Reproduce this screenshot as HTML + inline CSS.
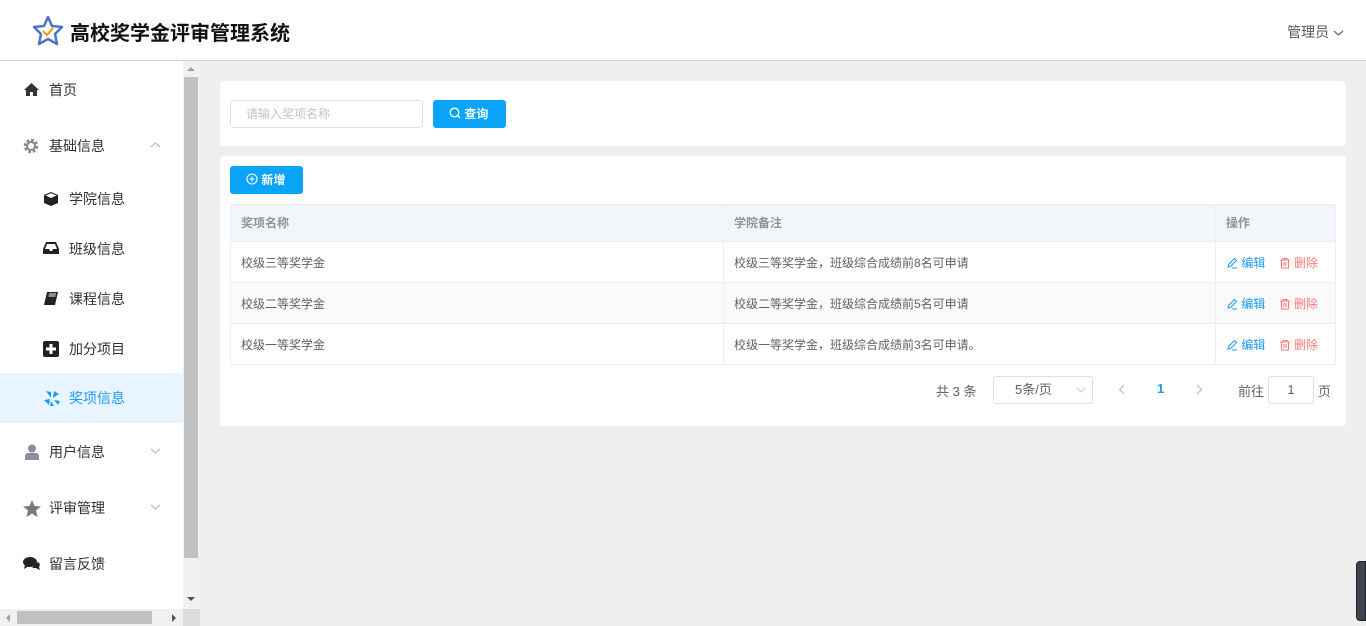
<!DOCTYPE html>
<html><head><meta charset="utf-8"><style>
*{box-sizing:border-box;margin:0;padding:0}
body{width:1366px;height:626px;overflow:hidden;font-family:"Liberation Sans","Noto Sans CJK SC",sans-serif;background:#efefef;position:relative;color:#303133}
.hdr{position:absolute;left:0;top:0;width:1366px;height:61px;background:#fff;border-bottom:1px solid #d4d4d4}
.title{position:absolute;left:70px;top:17px;font-size:20px;font-weight:bold;color:#111}
.admin{position:absolute;right:22px;top:22px;font-size:14px;color:#555}
.side{position:absolute;left:0;top:61px;width:183px;height:548px;background:#fff}
.mi{position:absolute;left:0;width:183px;height:50px;font-size:14px;color:#303133}
.mi span{position:absolute;top:16px;line-height:18px}
.mi svg{position:absolute;top:17px}
.vs{position:absolute;left:183px;top:61px;width:17px;height:548px;background:#f1f1f1}
.hs{position:absolute;left:0;top:609px;width:200px;height:17px;background:#f1f1f1}
.card{position:absolute;left:220px;width:1126px;background:#fff;border-radius:4px}
.btn{position:absolute;height:28px;background:#0aa5f8;border-radius:3px;color:#fff;font-size:12px;font-weight:bold;line-height:28px}
table{position:absolute;left:10px;top:48px;width:1106px;border-collapse:collapse;font-size:12px;color:#606266}
td,th{border:1px solid #ebeef5;text-align:left;padding-left:10px}
th{background:#f2f5f9;height:37px;font-weight:bold;color:#909399;padding-top:0;line-height:14px}
td{height:41px}
tr.s td{background:#fafafa}
.ed{color:#1a9cf5}.dl{color:#f77}
.ic{vertical-align:-2px}
</style></head><body>
<div class="hdr">
<svg style="position:absolute;left:31px;top:14px" width="34" height="33" viewBox="0 0 34 33"><path d="M17 3 L21 12 L31 13 L24 20 L26 30 L17 25 L8 30 L10 20 L3 13 L13 12 Z" fill="none" stroke="#4a74c8" stroke-width="2.5" stroke-linejoin="round"/><path d="M12 17 L16 21 L22 14" fill="none" stroke="#f49a2c" stroke-width="2.2"/></svg>
<div class="title">高校奖学金评审管理系统</div>
<div class="admin">管理员 <svg width="11" height="8" viewBox="0 0 11 8"><path d="M1 2 L5.5 6 L10 2" fill="none" stroke="#666" stroke-width="1.2"/></svg></div>
</div>
<div class="side">
<div class="mi" style="top:4px"><svg style="left:23px" width="17" height="15" viewBox="0 0 17 15"><path d="M8.5 1 L1 8 H3 V14 H7 V10 H10 V14 H14 V8 H16 Z" fill="#333"/></svg><span style="left:49px">首页</span></div>
<div class="mi" style="top:60px"><svg style="left:23px" width="16" height="16" viewBox="0 0 16 16"><circle cx="8" cy="8" r="5.5" fill="none" stroke="#888" stroke-width="3.5" stroke-dasharray="2.5 1.8"/><circle cx="8" cy="8" r="4" fill="none" stroke="#888" stroke-width="2"/></svg><span style="left:49px">基础信息</span><svg style="left:150px;top:20px" width="11" height="8" viewBox="0 0 11 8"><path d="M1 6 L5.5 2 L10 6" fill="none" stroke="#aaa" stroke-width="1"/></svg></div>
<div class="mi" style="top:113px"><svg style="left:43px" width="16" height="16" viewBox="0 0 16 16"><path d="M8 1 L15 4 V12 L8 15 L1 12 V4 Z" fill="#222"/><path d="M2.5 4.5 L8 7 L13.5 4.5 L8 2.3 Z" fill="#fff"/></svg><span style="left:69px">学院信息</span></div>
<div class="mi" style="top:163px"><svg style="left:43px" width="16" height="14" viewBox="0 0 16 14"><path d="M3 1 H13 L16 8 V13 H0 V8 Z" fill="#222"/><path d="M4 3 H12 L14 8 H10 L9 10 H7 L6 8 H2 Z" fill="#fff"/></svg><span style="left:69px">班级信息</span></div>
<div class="mi" style="top:213px"><svg style="left:43px" width="16" height="15" viewBox="0 0 16 15"><path d="M4 1 H15 L12 14 H1 Z" fill="#222"/><path d="M6 3 H13 M5.5 5 H12.5" stroke="#fff" stroke-width="1"/></svg><span style="left:69px">课程信息</span></div>
<div class="mi" style="top:263px"><svg style="left:43px" width="16" height="16" viewBox="0 0 16 16"><rect x="0" y="0" width="16" height="16" rx="2" fill="#222"/><path d="M8 3 V13 M3 8 H13" stroke="#fff" stroke-width="3"/></svg><span style="left:69px">加分项目</span></div>
<div class="mi" style="top:312px;background:#e8f4ff;height:50px"><svg style="left:44px;top:17px" width="16" height="17" viewBox="0 0 16 17"><path d="M2 1 L7 2 L7 8 Z M0 10 L6 9 L5 15 Z M7 11 L10 16 L6 16 Z M10 1 L15 4 L9 8 Z M10 10 L16 11 L14 15 Z" fill="#1a9cf5"/></svg><span style="left:69px;color:#1a9cf5">奖项信息</span></div>
<div class="mi" style="top:366px"><svg style="left:25px" width="14" height="16" viewBox="0 0 14 16"><circle cx="7" cy="4.5" r="4" fill="#8a8f99"/><path d="M0 16 V12 Q0 9 4 9 H10 Q14 9 14 12 V16 Z" fill="#8a8f99"/></svg><span style="left:49px">用户信息</span><svg style="left:150px;top:20px" width="11" height="8" viewBox="0 0 11 8"><path d="M1 2 L5.5 6 L10 2" fill="none" stroke="#aaa" stroke-width="1"/></svg></div>
<div class="mi" style="top:422px"><svg style="left:23px" width="18" height="17" viewBox="0 0 18 17"><path d="M9 0 L11.5 6 L18 6.5 L13 10.5 L14.5 17 L9 13.5 L3.5 17 L5 10.5 L0 6.5 L6.5 6 Z" fill="#777"/></svg><span style="left:49px">评审管理</span><svg style="left:150px;top:20px" width="11" height="8" viewBox="0 0 11 8"><path d="M1 2 L5.5 6 L10 2" fill="none" stroke="#aaa" stroke-width="1"/></svg></div>
<div class="mi" style="top:478px"><svg style="left:23px" width="18" height="15" viewBox="0 0 18 15"><ellipse cx="7" cy="6" rx="7" ry="5" fill="#222"/><path d="M2 9 L1 13 L6 10 Z" fill="#222"/><path d="M15 6 Q18 8 16 11 L17 14 L13 12 Q10 12 9 12" fill="#222"/></svg><span style="left:49px">留言反馈</span></div>
</div>
<div class="vs"><div style="position:absolute;left:1px;top:16px;width:14px;height:481px;background:#c1c1c1"></div>
<div style="position:absolute;left:4px;top:6px;border:4px solid transparent;border-bottom:4px solid #a0a0a0;border-top:0"></div>
<div style="position:absolute;left:4px;top:536px;border:4px solid transparent;border-top:4px solid #505050;border-bottom:0"></div></div>
<div class="hs"><div style="position:absolute;left:17px;top:2px;width:135px;height:13px;background:#c1c1c1"></div>
<div style="position:absolute;left:6px;top:5px;border:4px solid transparent;border-right:4px solid #a0a0a0;border-left:0"></div>
<div style="position:absolute;left:172px;top:5px;border:4px solid transparent;border-left:4px solid #505050;border-right:0"></div></div>
<div style="position:absolute;left:183px;top:609px;width:17px;height:17px;background:#dcdcdc"></div>

<div class="card" style="top:81px;height:65px">
<div style="position:absolute;left:10px;top:19px;width:193px;height:28px;border:1px solid #dcdfe6;border-radius:4px;font-size:12px;color:#c0c4cc;line-height:26px;padding-left:15px">请输入奖项名称</div>
<div class="btn" style="left:213px;top:19px;width:73px;padding-left:16px"><svg width="12" height="12" viewBox="0 0 12 12" style="vertical-align:-1px"><circle cx="5.5" cy="5.5" r="4.3" fill="none" stroke="#fff" stroke-width="1.3"/><path d="M8.5 8.5 L11 11" stroke="#fff" stroke-width="1.3"/></svg> 查询</div>
</div>
<div class="card" style="top:156px;height:270px">
<div class="btn" style="left:10px;top:10px;width:73px;padding-left:16px"><svg width="12" height="12" viewBox="0 0 12 12" style="vertical-align:-1px"><circle cx="6" cy="6" r="5" fill="none" stroke="#fff" stroke-width="1.1"/><path d="M6 3.5 V8.5 M3.5 6 H8.5" stroke="#fff" stroke-width="1.1"/></svg> 新增</div>
<table>
<tr style="height:37px"><th style="width:493px;height:36px">奖项名称</th><th style="width:492px;height:36px">学院备注</th><th style="height:36px">操作</th></tr>
<tr><td>校级三等奖学金</td><td>校级三等奖学金，班级综合成绩前8名可申请</td><td><span class="ed"><svg class="ic" width="12" height="12" viewBox="0 0 12 12"><path d="M2 10 L2.5 7.5 L8.5 1.5 L10.5 3.5 L4.5 9.5 Z M6 11 H11" fill="none" stroke="#1a9cf5" stroke-width="1"/></svg> 编辑</span>&nbsp;&nbsp;&nbsp;&nbsp;<span class="dl"><svg class="ic" width="12" height="12" viewBox="0 0 12 12"><path d="M1 3 H11 M4 3 V1.5 H8 V3 M2.5 3 V11 H9.5 V3 M5 5 V9 M7 5 V9" fill="none" stroke="#f77" stroke-width="1"/></svg> 删除</span></td></tr>
<tr class="s"><td>校级二等奖学金</td><td>校级二等奖学金，班级综合成绩前5名可申请</td><td><span class="ed"><svg class="ic" width="12" height="12" viewBox="0 0 12 12"><path d="M2 10 L2.5 7.5 L8.5 1.5 L10.5 3.5 L4.5 9.5 Z M6 11 H11" fill="none" stroke="#1a9cf5" stroke-width="1"/></svg> 编辑</span>&nbsp;&nbsp;&nbsp;&nbsp;<span class="dl"><svg class="ic" width="12" height="12" viewBox="0 0 12 12"><path d="M1 3 H11 M4 3 V1.5 H8 V3 M2.5 3 V11 H9.5 V3 M5 5 V9 M7 5 V9" fill="none" stroke="#f77" stroke-width="1"/></svg> 删除</span></td></tr>
<tr><td>校级一等奖学金</td><td>校级一等奖学金，班级综合成绩前3名可申请。</td><td><span class="ed"><svg class="ic" width="12" height="12" viewBox="0 0 12 12"><path d="M2 10 L2.5 7.5 L8.5 1.5 L10.5 3.5 L4.5 9.5 Z M6 11 H11" fill="none" stroke="#1a9cf5" stroke-width="1"/></svg> 编辑</span>&nbsp;&nbsp;&nbsp;&nbsp;<span class="dl"><svg class="ic" width="12" height="12" viewBox="0 0 12 12"><path d="M1 3 H11 M4 3 V1.5 H8 V3 M2.5 3 V11 H9.5 V3 M5 5 V9 M7 5 V9" fill="none" stroke="#f77" stroke-width="1"/></svg> 删除</span></td></tr>
</table>
<div style="position:absolute;left:716px;top:225px;font-size:13px;color:#606266">共 3 条</div>
<div style="position:absolute;left:773px;top:220px;width:100px;height:28px;border:1px solid #dcdfe6;border-radius:3px;font-size:13px;color:#606266;line-height:26px;padding-left:21px">5条/页<svg style="position:absolute;right:6px;top:10px" width="10" height="7" viewBox="0 0 10 7"><path d="M1 1 L5 5 L9 1" fill="none" stroke="#c0c4cc" stroke-width="1"/></svg></div>
<svg style="position:absolute;left:898px;top:228px" width="7" height="11" viewBox="0 0 7 11"><path d="M6 1 L1.5 5.5 L6 10" fill="none" stroke="#c0c4cc" stroke-width="1.3"/></svg>
<div style="position:absolute;left:937px;top:225px;font-size:13px;font-weight:bold;color:#1a9cf5">1</div>
<svg style="position:absolute;left:976px;top:228px" width="7" height="11" viewBox="0 0 7 11"><path d="M1 1 L5.5 5.5 L1 10" fill="none" stroke="#c0c4cc" stroke-width="1.3"/></svg>
<div style="position:absolute;left:1018px;top:225px;font-size:13px;color:#606266">前往</div>
<div style="position:absolute;left:1048px;top:220px;width:46px;height:28px;border:1px solid #dcdfe6;border-radius:3px;font-size:13px;color:#606266;line-height:26px;text-align:center">1</div>
<div style="position:absolute;left:1098px;top:225px;font-size:13px;color:#606266">页</div>
</div>
<div style="position:absolute;left:1356px;top:561px;width:10px;height:60px;background:#3d4350;border-radius:4px 0 0 4px;border:1px solid #222"></div>
</body></html>
